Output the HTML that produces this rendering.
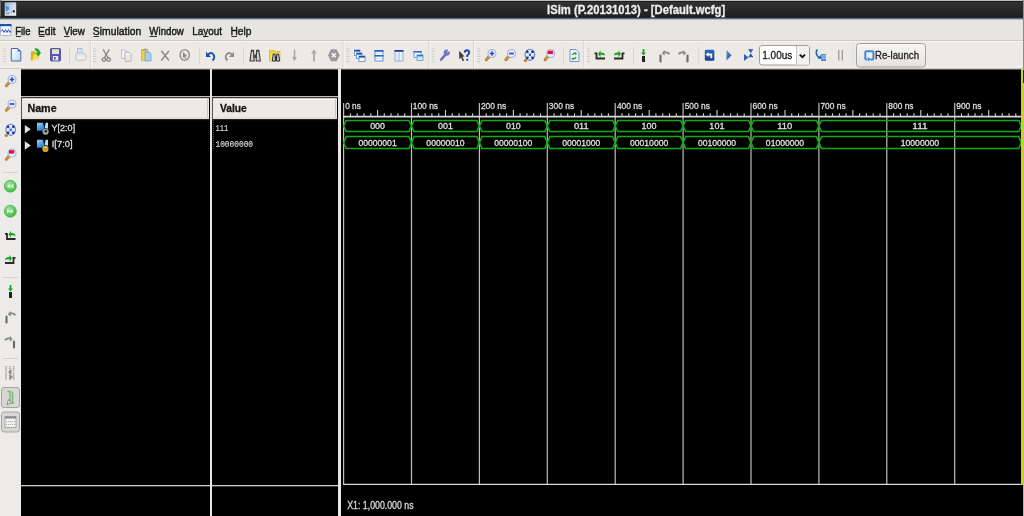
<!DOCTYPE html>
<html><head><meta charset="utf-8"><title>ISim</title>
<style>html,body{margin:0;padding:0;background:#edebe8;}body{width:1024px;height:516px;overflow:hidden;font-family:"Liberation Sans",sans-serif;}svg{display:block;will-change:transform;}</style>
</head><body>
<svg width="1024" height="516" viewBox="0 0 1024 516">
<defs>
<linearGradient id="gtitle" x1="0" y1="0" x2="0" y2="1"><stop offset="0" stop-color="#353535"/><stop offset="1" stop-color="#1c1c1c"/></linearGradient>
<linearGradient id="gbtn" x1="0" y1="0" x2="0" y2="1"><stop offset="0" stop-color="#f7f6f4"/><stop offset="1" stop-color="#e4e2de"/></linearGradient>
</defs>
<defs>
<linearGradient id="gpage" x1="0" y1="0" x2="1" y2="1"><stop offset="0" stop-color="#ffffff"/><stop offset="1" stop-color="#b8d8f6"/></linearGradient>
<radialGradient id="ggreen" cx="0.4" cy="0.35" r="0.7"><stop offset="0" stop-color="#9ee89a"/><stop offset="1" stop-color="#3cb83c"/></radialGradient>
</defs>
<defs>
<linearGradient id="gblue" x1="0" y1="0" x2="0" y2="1"><stop offset="0" stop-color="#2a66c4"/><stop offset="1" stop-color="#163e94"/></linearGradient>
<linearGradient id="gblue2" x1="0" y1="0" x2="1" y2="1"><stop offset="0" stop-color="#5a9ae0"/><stop offset="1" stop-color="#1a48a8"/></linearGradient>
<linearGradient id="gtic" x1="0" y1="0" x2="1" y2="1"><stop offset="0" stop-color="#8aaee0"/><stop offset="0.45" stop-color="#c8d6ea"/><stop offset="1" stop-color="#eef0f4"/></linearGradient>
<linearGradient id="gsig" x1="0" y1="0" x2="0.6" y2="1"><stop offset="0" stop-color="#a4d4f8"/><stop offset="0.6" stop-color="#4aa0e8"/><stop offset="1" stop-color="#2a78d0"/></linearGradient>
</defs>
<rect x="0" y="0" width="1024" height="516" fill="#edeae6"/>
<rect x="0" y="0" width="1024" height="19.5" fill="url(#gtitle)"/>
<rect x="0" y="0" width="1024" height="1" fill="#bcbcbc"/>
<rect x="0" y="1" width="1024" height="1" fill="#1c1c1c"/>
<rect x="0" y="0" width="1" height="19" fill="#6a6a6a"/>
<rect x="0" y="16.8" width="1024" height="1" fill="#141820"/>
<rect x="0" y="17.8" width="1024" height="1.6" fill="#5c6c84"/>
<rect x="4.7" y="2.3" width="11.5" height="13.5" fill="url(#gtic)"/><path d="M5.7,6.3 q3,-1 4,2 q-1,3 -4,3 z" fill="#4a7ed0" opacity="0.8"/><path d="M6.2,13.3 h3 M10.7,12.8 l2,-2" stroke="#5a6a88" stroke-width="1"/><rect x="13.0" y="10.1" width="1.8" height="2.4" fill="#2a2a2a"/>
<text x="547.07" y="13.70" font-family='"Liberation Sans",sans-serif' font-size="12.14" font-weight="bold" fill="#ececec" stroke="#ececec" stroke-width="0.3" textLength="178.16" lengthAdjust="spacingAndGlyphs" >ISim (P.20131013) - [Default.wcfg]</text>
<rect x="0" y="19.4" width="1024" height="20.8" fill="#e7e5e1"/>
<rect x="0.5" y="24.5" width="10.5" height="11" rx="1" fill="#f6f8fc" stroke="#98a8c8" stroke-width="0.8"/><rect x="0" y="24" width="11.5" height="2.2" fill="#2050a8"/><path d="M1,31.5 l1.5,-2 l1.5,3 l1.5,-3 l1.5,3 l1.5,-3 l1.5,3 l1,-1.5" fill="none" stroke="#2a5cc0" stroke-width="1"/>
<text x="15.14" y="34.90" font-family='"Liberation Sans",sans-serif' font-size="11.03" fill="#1a1a1a" stroke="#1a1a1a" stroke-width="0.45" textLength="15.30" lengthAdjust="spacingAndGlyphs" >File</text>
<text x="37.88" y="34.90" font-family='"Liberation Sans",sans-serif' font-size="11.03" fill="#1a1a1a" stroke="#1a1a1a" stroke-width="0.45" textLength="17.71" lengthAdjust="spacingAndGlyphs" >Edit</text>
<text x="63.85" y="34.90" font-family='"Liberation Sans",sans-serif' font-size="11.03" fill="#1a1a1a" stroke="#1a1a1a" stroke-width="0.45" textLength="20.94" lengthAdjust="spacingAndGlyphs" >View</text>
<text x="92.83" y="34.90" font-family='"Liberation Sans",sans-serif' font-size="11.03" fill="#1a1a1a" stroke="#1a1a1a" stroke-width="0.45" textLength="48.43" lengthAdjust="spacingAndGlyphs" >Simulation</text>
<text x="149.35" y="34.90" font-family='"Liberation Sans",sans-serif' font-size="11.03" fill="#1a1a1a" stroke="#1a1a1a" stroke-width="0.45" textLength="34.42" lengthAdjust="spacingAndGlyphs" >Window</text>
<text x="192.20" y="34.90" font-family='"Liberation Sans",sans-serif' font-size="11.59" fill="#1a1a1a" stroke="#1a1a1a" stroke-width="0.45" textLength="29.87" lengthAdjust="spacingAndGlyphs" >Layout</text>
<text x="230.38" y="34.90" font-family='"Liberation Sans",sans-serif' font-size="11.03" fill="#1a1a1a" stroke="#1a1a1a" stroke-width="0.45" textLength="21.05" lengthAdjust="spacingAndGlyphs" >Help</text>
<rect x="16" y="36" width="5" height="1" fill="#303030"/>
<rect x="39" y="36" width="5.5" height="1" fill="#303030"/>
<rect x="64" y="36" width="5.5" height="1" fill="#303030"/>
<rect x="93.5" y="36" width="5.5" height="1" fill="#303030"/>
<rect x="149.5" y="36" width="7.5" height="1" fill="#303030"/>
<rect x="203" y="36" width="5.5" height="1" fill="#303030"/>
<rect x="231.5" y="36" width="5.5" height="1" fill="#303030"/>
<rect x="0" y="40" width="1024" height="1" fill="#ceCAc5"/>
<rect x="0" y="41" width="1024" height="1" fill="#f6f4f1"/>
<rect x="0" y="66.3" width="1024" height="1" fill="#f3f1ee"/>
<rect x="0" y="68" width="1024" height="1" fill="#cdc9c4"/>
<rect x="89.8" y="41" width="1" height="27" fill="#d0cecA"/><rect x="90.8" y="41" width="1" height="27" fill="#faf9f8"/>
<rect x="342.6" y="41" width="1" height="27" fill="#d0cecA"/><rect x="343.6" y="41" width="1" height="27" fill="#faf9f8"/>
<rect x="428.5" y="41" width="1" height="27" fill="#d0cecA"/><rect x="429.5" y="41" width="1" height="27" fill="#faf9f8"/>
<rect x="473.2" y="41" width="1" height="27" fill="#d0cecA"/><rect x="474.2" y="41" width="1" height="27" fill="#faf9f8"/>
<rect x="583.4" y="41" width="1" height="27" fill="#d0cecA"/><rect x="584.4" y="41" width="1" height="27" fill="#faf9f8"/>
<rect x="69" y="47" width="1" height="17" fill="#d8d6d2"/>
<rect x="199" y="47" width="1" height="17" fill="#d8d6d2"/>
<rect x="243" y="47" width="1" height="17" fill="#d8d6d2"/>
<rect x="563" y="47" width="1" height="17" fill="#d8d6d2"/>
<rect x="633" y="47" width="1" height="17" fill="#d8d6d2"/>
<rect x="697.8" y="47" width="1" height="17" fill="#d8d6d2"/>
<rect x="3.2" y="48.5" width="3" height="1" fill="#cfcdc9"/><rect x="3.2" y="51.0" width="3" height="1" fill="#cfcdc9"/><rect x="3.2" y="53.5" width="3" height="1" fill="#cfcdc9"/><rect x="3.2" y="56.0" width="3" height="1" fill="#cfcdc9"/><rect x="3.2" y="58.5" width="3" height="1" fill="#cfcdc9"/><rect x="3.2" y="61.0" width="3" height="1" fill="#cfcdc9"/>
<rect x="93.0" y="48.5" width="3" height="1" fill="#cfcdc9"/><rect x="93.0" y="51.0" width="3" height="1" fill="#cfcdc9"/><rect x="93.0" y="53.5" width="3" height="1" fill="#cfcdc9"/><rect x="93.0" y="56.0" width="3" height="1" fill="#cfcdc9"/><rect x="93.0" y="58.5" width="3" height="1" fill="#cfcdc9"/><rect x="93.0" y="61.0" width="3" height="1" fill="#cfcdc9"/>
<rect x="346.5" y="48.5" width="3" height="1" fill="#cfcdc9"/><rect x="346.5" y="51.0" width="3" height="1" fill="#cfcdc9"/><rect x="346.5" y="53.5" width="3" height="1" fill="#cfcdc9"/><rect x="346.5" y="56.0" width="3" height="1" fill="#cfcdc9"/><rect x="346.5" y="58.5" width="3" height="1" fill="#cfcdc9"/><rect x="346.5" y="61.0" width="3" height="1" fill="#cfcdc9"/>
<rect x="431.5" y="48.5" width="3" height="1" fill="#cfcdc9"/><rect x="431.5" y="51.0" width="3" height="1" fill="#cfcdc9"/><rect x="431.5" y="53.5" width="3" height="1" fill="#cfcdc9"/><rect x="431.5" y="56.0" width="3" height="1" fill="#cfcdc9"/><rect x="431.5" y="58.5" width="3" height="1" fill="#cfcdc9"/><rect x="431.5" y="61.0" width="3" height="1" fill="#cfcdc9"/>
<rect x="477.0" y="48.5" width="3" height="1" fill="#cfcdc9"/><rect x="477.0" y="51.0" width="3" height="1" fill="#cfcdc9"/><rect x="477.0" y="53.5" width="3" height="1" fill="#cfcdc9"/><rect x="477.0" y="56.0" width="3" height="1" fill="#cfcdc9"/><rect x="477.0" y="58.5" width="3" height="1" fill="#cfcdc9"/><rect x="477.0" y="61.0" width="3" height="1" fill="#cfcdc9"/>
<rect x="587.0" y="48.5" width="3" height="1" fill="#cfcdc9"/><rect x="587.0" y="51.0" width="3" height="1" fill="#cfcdc9"/><rect x="587.0" y="53.5" width="3" height="1" fill="#cfcdc9"/><rect x="587.0" y="56.0" width="3" height="1" fill="#cfcdc9"/><rect x="587.0" y="58.5" width="3" height="1" fill="#cfcdc9"/><rect x="587.0" y="61.0" width="3" height="1" fill="#cfcdc9"/>
<path d="M11.3,48.5 h6.5 l3,3 v9.5 h-9.5 z" fill="url(#gpage)" stroke="#4a64a8" stroke-width="1"/><path d="M17.8,48.5 v3 h3 z" fill="#3b5ba8"/>
<path d="M31.0,51.5 L34.5,51.0 L35.5,52.3 L38.2,52.5 L38.2,58.0 L32.0,60.8 L30.8,60.3 Z" fill="#d4b428"/><path d="M32.0,60.8 L33.8,54.5 L40.2,53.6 L38.6,58.6 Z" fill="#f2de4c"/><path d="M34.8,48.3 Q39.8,48.2 40.1,52.6 L41.4,52.4 L38.3,56.5 L35.7,52.9 L37.4,52.7 Q37.1,50.6 34.8,50.3 Z" fill="#22a52e"/>
<rect x="50.5" y="48.5" width="10" height="12.5" rx="0.8" fill="#5656b4" stroke="#43439a" stroke-width="0.8"/><rect x="52" y="49.2" width="7" height="4.8" fill="#dfe3d0"/><rect x="52.8" y="56" width="5.5" height="4.5" fill="#e8e8f4"/><rect x="54" y="57" width="1.6" height="2.5" fill="#4c4ca8"/>
<rect x="77.5" y="48.5" width="4.5" height="5.5" fill="#cfe2f4" stroke="#b4b0cc" stroke-width="0.8"/><path d="M75.6,55 q0.4,-1.8 2,-2 h5.5 q2.6,0.3 3,2.6 v3.2 q-0.8,1.8 -3.6,1.9 h-4.8 q-1.8,-0.3 -2.1,-1.8 z" fill="#e6e6e6" stroke="#bdbdbd" stroke-width="0.8"/><path d="M77.5,57.5 h6" stroke="#f8f8f8" stroke-width="1"/>
<path d="M104.3,57.8 L109.3,49.3" stroke="#8a8a8a" stroke-width="1.4"/><path d="M108.10000000000001,57.8 L103.10000000000001,49.3" stroke="#8a8a8a" stroke-width="1.4"/><circle cx="103.9" cy="59.6" r="1.8" fill="none" stroke="#828282" stroke-width="1.3"/><circle cx="108.60000000000001" cy="59.6" r="1.8" fill="none" stroke="#828282" stroke-width="1.3"/>
<path d="M121.5,50.0 h4 l1.5,1.5 v7 h-5.5 z" fill="#f0f0f0" stroke="#b8b8b8" stroke-width="0.8"/><path d="M125,52.3 h4 l2,2 v7 h-6 z" fill="#f4f4f4" stroke="#aaaaaa" stroke-width="0.8"/><path d="M126,56.0 h3.5 M126,58.0 h3.5 M126,60.0 h3.5" stroke="#c8c8c8" stroke-width="0.6"/>
<rect x="141.5" y="49.5" width="6.5" height="11" rx="0.5" fill="#ecd24a" stroke="#c0a020" stroke-width="0.6"/><path d="M143,49.2 q2,-1.2 4,0 v1.2 h-4 z" fill="#9a9a9a"/><path d="M145,52 h4 l2,2 v7 h-6 z" fill="#a8cdf2" stroke="#6a92cc" stroke-width="0.7"/>
<path d="M161.3,50.8 L169.0,60.5 M169.0,50.8 L161.3,60.5" stroke="#8e8e8e" stroke-width="1.6"/>
<ellipse cx="184.7" cy="55" rx="4.6" ry="5.4" fill="none" stroke="#8e8e8e" stroke-width="1.4"/><path d="M182.89999999999998,51.8 L187.29999999999998,56.2 L185.29999999999998,56.2 L186.29999999999998,58.6 L185.1,59 L184.1,56.8 L182.89999999999998,58 Z" fill="#8a8a8a"/>
<path d="M208.0,54.5 q3,-3 5.5,0 q2,3 -1,6" fill="none" stroke="#1a4fb8" stroke-width="1.9"/><path d="M206.0,51.8 v5.2 h5 z" fill="#1a4fb8"/>
<path d="M232,54.5 q-3,-3 -5.5,0 q-2,3 1,6" fill="none" stroke="#8e8e8e" stroke-width="1.9"/><path d="M234,51.8 v5.2 h-5 z" fill="#8e8e8e"/>
<path d="M251.40,50.20 L253.60,50.20 L254.20,61.00 L250.00,61.00 Z" fill="#cfcfcf" stroke="#3c3c3c" stroke-width="1.1" stroke-linejoin="round"/><path d="M256.60,50.20 L258.80,50.20 L260.40,61.00 L256.20,61.00 Z" fill="#cfcfcf" stroke="#3c3c3c" stroke-width="1.1" stroke-linejoin="round"/><path d="M253.60,54.50 h3 v3.5 h-3 z" fill="#4a4a4a"/><path d="M251.30,50.00 h2.4 v1.6 h-2.4 z M256.50,50.00 h2.4 v1.6 h-2.4 z" fill="#3a3a3a"/>
<path d="M269.5,50.3 h4.5 l1,1.2 h5 v9.5 h-10.5 z" fill="#ecd838" stroke="#c4a41c" stroke-width="0.6"/><path d="M269.8,61.0 l2,-8 h8.2 l-1,8 z" fill="#f4e460"/><path d="M273.2,54.0 h1.8 l0.5,7 h-3.2 z M276.8,54.0 h1.8 l1,7 h-3.2 z" fill="#c8c8d8" stroke="#1e1e30" stroke-width="0.9" stroke-linejoin="round"/><rect x="275.2" y="56.5" width="1.6" height="2.5" fill="#1e1e30"/>
<path d="M294.5,49.5 v8.5" stroke="#a8a8a8" stroke-width="1.6"/><path d="M292,57 h5 l-2.5,4 z" fill="#a8a8a8"/>
<path d="M314,52.5 v9" stroke="#a8a8a8" stroke-width="1.8"/><path d="M311,53.5 h6 l-3,-4 z" fill="#a8a8a8"/>
<path d="M331.0,49.2 h5.6 l3,6 l-3,6 h-5.6 l-3,-6 z" fill="#9a9a9a"/><path d="M331.8,53.2 L335.8,57.2 M335.8,53.2 L331.8,57.2" stroke="#fafafa" stroke-width="1.5"/>
<rect x="354.5" y="50" width="5.5" height="5.5" fill="#f4f8fc" stroke="#5d8ad0" stroke-width="0.8"/><rect x="354.5" y="50" width="5.5" height="1.6" fill="#1f4fa6"/><rect x="356.5" y="53" width="5.5" height="5.5" fill="#f4f8fc" stroke="#5d8ad0" stroke-width="0.8"/><rect x="356.5" y="53" width="5.5" height="1.6" fill="#1f4fa6"/><rect x="359" y="56" width="6" height="5.5" fill="#f4f8fc" stroke="#5d8ad0" stroke-width="0.8"/><rect x="359" y="56" width="6" height="1.6" fill="#1f4fa6"/>
<rect x="375.0" y="50.5" width="8" height="10.5" fill="#f8fbff" stroke="#3f78cc" stroke-width="0.8"/><rect x="374.5" y="50" width="9" height="1.8" fill="#2a62c2"/><rect x="374.5" y="55" width="9" height="1.6" fill="#2a62c2"/><path d="M376.0,53.3 h6 M376.0,58.5 h6" stroke="#cfe4f8" stroke-width="1"/>
<rect x="395.0" y="50.5" width="8" height="10.5" fill="#f4faff" stroke="#7f9ccc" stroke-width="0.8"/><rect x="394.5" y="50" width="9" height="1.8" fill="#1f3f98"/><path d="M399.0,52 v9" stroke="#8aa4d0" stroke-width="0.9"/><path d="M396.8,53 v7 M401.2,53 v7" stroke="#d4ecfc" stroke-width="1.4"/>
<rect x="414.0" y="51.5" width="7" height="6" fill="#e8f2fc" stroke="#5d8ad0" stroke-width="0.8"/><rect x="413.5" y="51" width="8" height="1.5" fill="#2a62c2"/><rect x="417.0" y="55" width="6" height="5.5" fill="#cfe8fa" stroke="#5d9ad8" stroke-width="0.8"/><rect x="417.0" y="55" width="6" height="1.4" fill="#2a72c2"/>
<path d="M441.1,59.6 L445.7,54.4" stroke="#6e6ec4" stroke-width="2.5" stroke-linecap="round"/><circle cx="446.8" cy="52.6" r="3.1" fill="#7474cc"/><path d="M447.1,52.4 l1.2,-3.5 l2.5,1.8 z" fill="#edebe8"/>
<path d="M459.2,50.8 L464.6,56.4 L462.4,56.8 L464.2,60.6 L462.7,61.2 L461,57.4 L459.2,59.2 z" fill="#3e3e3e"/><path d="M464.6,52.6 q0.4,-2.4 2.3,-2.4 q2.3,0.1 2.3,2.3 q0,1.6 -1.9,2.7 v1.9" fill="none" stroke="#2244aa" stroke-width="1.9"/><rect x="466.3" y="58.8" width="1.9" height="2" fill="#2244aa"/>
<path d="M486.4,59.8 L489.2,56.5" stroke="#b8741e" stroke-width="2.9" stroke-linecap="round"/><path d="M486.4,59.8 L489.2,56.5" stroke="#dc9a40" stroke-width="1.3" stroke-linecap="round"/><circle cx="492" cy="53.5" r="4" fill="#e4ecfc" stroke="#a4b2e6" stroke-width="1.1"/><path d="M489.8,53.5 h4.4 M492,51.3 v4.4" stroke="#2e4ea8" stroke-width="1.5"/>
<path d="M505.9,59.8 L508.7,56.5" stroke="#b8741e" stroke-width="2.9" stroke-linecap="round"/><path d="M505.9,59.8 L508.7,56.5" stroke="#dc9a40" stroke-width="1.3" stroke-linecap="round"/><circle cx="511.5" cy="53.5" r="4" fill="#e4ecfc" stroke="#a4b2e6" stroke-width="1.1"/><path d="M509.2,53.5 h4.6" stroke="#2e4ea8" stroke-width="1.7"/>
<circle cx="525.5" cy="60.4" r="1.7" fill="#c4862a"/><ellipse cx="529.9000000000001" cy="54.8" rx="4.8" ry="5.6" fill="#d6eefc" stroke="#6a7ad0" stroke-width="1.1"/><circle cx="527.3000000000001" cy="51.809999999999995" r="1.3" fill="#1a2a84"/><circle cx="532.5000000000001" cy="51.809999999999995" r="1.3" fill="#1a2a84"/><circle cx="527.3000000000001" cy="57.79" r="1.3" fill="#1a2a84"/><circle cx="532.5000000000001" cy="57.79" r="1.3" fill="#1a2a84"/><path d="M527.3000000000001,51.809999999999995 L532.5000000000001,57.79 M532.5000000000001,51.809999999999995 L527.3000000000001,57.79" stroke="#3a4a9a" stroke-width="0.6" opacity="0.6"/><rect x="529.0000000000001" y="53.9" width="1.8" height="1.8" fill="#2a3a8a"/>
<path d="M545.1,59.8 L547.9000000000001,56.5" stroke="#b8741e" stroke-width="2.9" stroke-linecap="round"/><path d="M545.1,59.8 L547.9000000000001,56.5" stroke="#dc9a40" stroke-width="1.3" stroke-linecap="round"/><circle cx="550.7" cy="53.5" r="4" fill="#e4ecfc" stroke="#a4b2e6" stroke-width="1.1"/><rect x="547.7" y="50.7" width="5.2" height="3.4" fill="#e8102a"/>
<path d="M570.0,49.5 h6 l3,3 v9 h-9 z" fill="#eef4fc" stroke="#6c88c8" stroke-width="0.9"/><path d="M572.5,55 q1,-2.5 3.5,-1.5" fill="none" stroke="#22a02a" stroke-width="1.5"/><path d="M576.0,57 q-1,2.5 -3.5,1.5" fill="none" stroke="#22a02a" stroke-width="1.5"/><path d="M575.0,52.3 l2.2,1.5 l-2,1.5 z M573.5,60.2 l-2.2,-1.5 l2,-1.5 z" fill="#22a02a"/>
<path d="M594.5,53.4 h2 v5.1 h8.5" fill="none" stroke="#2a2a2a" stroke-width="1.8"/><path d="M598.0,54 L600.5,50.3 L600.5,52.6 Q605.0,52.3 605.0,55.6 Q603.5,54.6 600.5,54.8 L600.5,57.2 z" fill="#1ea424"/>
<path d="M624.5,53.4 h-2 v5.1 h-8.5" fill="none" stroke="#2a2a2a" stroke-width="1.8"/><path d="M621.0,54 L618.5,50.3 L618.5,52.6 Q614.0,52.3 614.0,55.6 Q615.5,54.6 618.5,54.8 L618.5,57.2 z" fill="#1ea424"/>
<path d="M643.5,49 v4" stroke="#22a02a" stroke-width="1.8"/><path d="M641,52.5 h5 l-2.5,3 z" fill="#22a02a"/><rect x="642" y="56" width="3" height="6" fill="#222"/>
<path d="M660.5,55.5 v6" stroke="#6a6a6a" stroke-width="2.1" stroke-linecap="round"/><path d="M664.0,52.3 Q668.0,51.7 669.5,54.3" fill="none" stroke="#8c8c8c" stroke-width="2"/><path d="M661.7,53.5 L664.5,49.7 L664.8,55.5 z" fill="#8c8c8c"/>
<path d="M687.5,55.5 v6" stroke="#6a6a6a" stroke-width="2.1" stroke-linecap="round"/><path d="M684.0,52.3 Q680.0,51.7 678.5,54.3" fill="none" stroke="#8c8c8c" stroke-width="2"/><path d="M686.3,53.5 L683.5,49.7 L683.2,55.5 z" fill="#8c8c8c"/>
<rect x="704.8" y="49.8" width="9.5" height="11" rx="1.3" fill="url(#gblue)"/><path d="M707.7,54.5 h3.6 v3.8" fill="none" stroke="#f4f4f4" stroke-width="1.8"/><path d="M705.7,54.5 l2.8,-2.6 v5.2 z" fill="#f4f4f4"/>
<path d="M726.5,50 L731.5,55.3 L726.5,60.5 z" fill="url(#gblue2)"/>
<path d="M744,54.0 L748.5,57.5 L744,61.0 z" fill="#2d62c0"/><path d="M748.5,49.8 h4.5 M748.5,56.7 h4.5" stroke="#1f3f98" stroke-width="1"/><path d="M749,50.3 h3.5 l-1.75,3 z M749,56.3 h3.5 l-1.75,-3 z" fill="#2648a8"/>
<rect x="821.0" y="54" width="5" height="7" fill="#5a88d0"/><path d="M821.0,56 h5 M821.0,58.3 h5" stroke="#d8e4f4" stroke-width="0.8"/><path d="M817.5,49.5 q-2.5,3 0,6.5 l2,1.8" fill="none" stroke="#1f6ab8" stroke-width="1.6"/><path d="M817.3,58.5 l4.2,0.5 l-0.5,-4.2 z" fill="#1f6ab8"/>
<path d="M838.8,50 v10.5 M842.3,50 v10.5" stroke="#8e8e8e" stroke-width="1.1"/>
<rect x="759.5" y="45.5" width="50" height="19.5" rx="2.5" fill="#ffffff" stroke="#a09e9a" stroke-width="1"/>
<rect x="796.5" y="46" width="12.5" height="18.5" fill="#f2f1ef"/>
<rect x="796" y="46" width="1" height="18.5" fill="#c4c2be"/>
<path d="M799.8,54.6 l2.6,2.6 l2.6,-2.6" fill="none" stroke="#111" stroke-width="1.9"/>
<text x="762.25" y="59.00" font-family='"Liberation Sans",sans-serif' font-size="11.43" fill="#1a1a1a" stroke="#1a1a1a" stroke-width="0.3" textLength="30.08" lengthAdjust="spacingAndGlyphs" >1.00us</text>
<rect x="856.5" y="43.5" width="69" height="23.5" rx="3" fill="url(#gbtn)" stroke="#a4a29e" stroke-width="1"/>
<path d="M867.4000000000001,59.6 h-1 q-1.1,0 -1.1,-1.1 v-6.1 q0,-1.1 1.1,-1.1 h5.9 q1.1,0 1.1,1.1 v6.1 q0,1.1 -1.1,1.1 h-1.8" fill="#f2ecea" stroke="#3d8ad6" stroke-width="2"/><path d="M867.8000000000001,56.800000000000004 l3.2,2.8 l-3.2,1.6 z" fill="#3d8ad6"/>
<text x="875.03" y="58.75" font-family='"Liberation Sans",sans-serif' font-size="10.83" fill="#1e1e1e" stroke="#1e1e1e" stroke-width="0.3" textLength="44.03" lengthAdjust="spacingAndGlyphs" >Re-launch</text>
<rect x="0" y="69" width="21" height="447" fill="#edebe8"/>
<path d="M6.4,85.8 L9.2,82.5" stroke="#b8741e" stroke-width="2.9" stroke-linecap="round"/><path d="M6.4,85.8 L9.2,82.5" stroke="#dc9a40" stroke-width="1.3" stroke-linecap="round"/><circle cx="12" cy="79.5" r="4" fill="#e4ecfc" stroke="#a4b2e6" stroke-width="1.1"/><path d="M9.8,79.5 h4.4 M12,77.3 v4.4" stroke="#2e4ea8" stroke-width="1.5"/>
<path d="M6.4,110.3 L9.2,107" stroke="#b8741e" stroke-width="2.9" stroke-linecap="round"/><path d="M6.4,110.3 L9.2,107" stroke="#dc9a40" stroke-width="1.3" stroke-linecap="round"/><circle cx="12" cy="104" r="4" fill="#e4ecfc" stroke="#a4b2e6" stroke-width="1.1"/><path d="M9.7,104 h4.6" stroke="#2e4ea8" stroke-width="1.7"/>
<circle cx="6.3" cy="135.4" r="1.7" fill="#c4862a"/><ellipse cx="10.7" cy="129.8" rx="4.8" ry="5.6" fill="#d6eefc" stroke="#6a7ad0" stroke-width="1.1"/><circle cx="8.1" cy="126.81000000000002" r="1.3" fill="#1a2a84"/><circle cx="13.299999999999999" cy="126.81000000000002" r="1.3" fill="#1a2a84"/><circle cx="8.1" cy="132.79000000000002" r="1.3" fill="#1a2a84"/><circle cx="13.299999999999999" cy="132.79000000000002" r="1.3" fill="#1a2a84"/><path d="M8.1,126.81000000000002 L13.299999999999999,132.79000000000002 M13.299999999999999,126.81000000000002 L8.1,132.79000000000002" stroke="#3a4a9a" stroke-width="0.6" opacity="0.6"/><rect x="9.799999999999999" y="128.9" width="1.8" height="1.8" fill="#2a3a8a"/>
<path d="M6.4,159.3 L9.2,156" stroke="#b8741e" stroke-width="2.9" stroke-linecap="round"/><path d="M6.4,159.3 L9.2,156" stroke="#dc9a40" stroke-width="1.3" stroke-linecap="round"/><circle cx="12" cy="153" r="4" fill="#e4ecfc" stroke="#a4b2e6" stroke-width="1.1"/><rect x="9" y="150.2" width="5.2" height="3.4" fill="#e8102a"/>
<rect x="3" y="172" width="15" height="1" fill="#d4d2ce"/>
<circle cx="10.3" cy="186.2" r="6" fill="url(#ggreen)" stroke="#3aa83a" stroke-width="0.6"/><path d="M7.800000000000001,186.2 h5 M7.800000000000001,186.2 l2,-1.8 M7.800000000000001,186.2 l2,1.8 M12.8,184.2 v4" stroke="#fff" stroke-width="1"/>
<circle cx="10.3" cy="211.2" r="6" fill="url(#ggreen)" stroke="#3aa83a" stroke-width="0.6"/><path d="M12.8,211.2 h-5 M12.8,211.2 l-2,-1.8 M12.8,211.2 l-2,1.8 M7.800000000000001,209.2 v4" stroke="#fff" stroke-width="1"/>
<path d="M5,233.9 h2 v5.1 h8.5" fill="none" stroke="#2a2a2a" stroke-width="1.8"/><path d="M8.5,234.5 L11,230.8 L11,233.1 Q15.5,232.8 15.5,236.1 Q14,235.1 11,235.3 L11,237.7 z" fill="#1ea424"/>
<path d="M15.5,257.9 h-2 v5.1 h-8.5" fill="none" stroke="#2a2a2a" stroke-width="1.8"/><path d="M12.0,258.5 L9.5,254.8 L9.5,257.1 Q5.0,256.8 5.0,260.1 Q6.5,259.1 9.5,259.3 L9.5,261.7 z" fill="#1ea424"/>
<rect x="3" y="277" width="15" height="1" fill="#d4d2ce"/>
<path d="M10.5,285 v4" stroke="#22a02a" stroke-width="1.8"/><path d="M8,288.5 h5 l-2.5,3 z" fill="#22a02a"/><rect x="9" y="292" width="3" height="6" fill="#222"/>
<path d="M6.5,316.5 v6" stroke="#6a6a6a" stroke-width="2.1" stroke-linecap="round"/><path d="M10.0,313.3 Q14.0,312.7 15.5,315.3" fill="none" stroke="#8c8c8c" stroke-width="2"/><path d="M7.7,314.5 L10.5,310.7 L10.8,316.5 z" fill="#8c8c8c"/>
<path d="M14.0,341.5 v6" stroke="#6a6a6a" stroke-width="2.1" stroke-linecap="round"/><path d="M10.5,338.3 Q6.5,337.7 5.0,340.3" fill="none" stroke="#8c8c8c" stroke-width="2"/><path d="M12.8,339.5 L10.0,335.7 L9.7,341.5 z" fill="#8c8c8c"/>
<rect x="3" y="358" width="15" height="1" fill="#d4d2ce"/>
<path d="M6,366 v14 M9.8,366 v14 M13.6,366 v14" stroke="#a4a4a4" stroke-width="1.6" stroke-dasharray="1.2 0.6"/>
<path d="M8,372 l3.5,-3 v6 z M13,377 l-3.5,-3 v6 z" fill="#8a8a8a"/>
<rect x="1.5" y="387.5" width="18" height="20" rx="2.5" fill="#d9d7d3" stroke="#a6a4a0" stroke-width="1"/>
<path d="M7.5,391.5 h2.5 v10 M12.5,391.5 v11.5 h1.5" fill="none" stroke="#74b874" stroke-width="1.4"/>
<path d="M7,404.5 l1.5,-5 l3,3.5 l-2,0.3 z" fill="#f4f4f4" stroke="#505050" stroke-width="0.6"/>
<rect x="1.5" y="412" width="18" height="20" rx="2.5" fill="#d9d7d3" stroke="#a6a4a0" stroke-width="1"/>
<rect x="5" y="416.5" width="11" height="11" fill="#f2f2f2" stroke="#9a9a9a" stroke-width="0.8"/>
<rect x="5" y="416.5" width="11" height="2" fill="#8a8a8a"/>
<path d="M6,421.5 h9 M6,424.5 h9" stroke="#a8a8a8" stroke-width="0.9" stroke-dasharray="1.2 0.8"/>
<rect x="21" y="69.4" width="1003" height="447" fill="#000"/>
<rect x="210" y="69" width="2" height="447" fill="#e9e7e4"/>
<rect x="338" y="69" width="3" height="447" fill="#e9e7e4"/>
<rect x="21" y="96" width="189" height="1" fill="#c4c2be"/>
<rect x="21" y="97" width="189" height="1.2" fill="#3a3a3a"/>
<rect x="21" y="98.2" width="188" height="21" fill="#edeae6"/>
<rect x="21" y="98" width="1" height="21" fill="#555"/>
<rect x="22" y="98.8" width="186" height="1.2" fill="#fbfaf9"/>
<rect x="22" y="117" width="187" height="2" fill="#e4e1dd"/>
<rect x="207" y="99" width="1" height="19" fill="#c8c6c2"/>
<rect x="21" y="119.2" width="189" height="1" fill="#202020"/>
<rect x="212" y="96" width="126" height="1" fill="#c4c2be"/>
<rect x="212" y="97" width="126" height="1.2" fill="#3a3a3a"/>
<rect x="212" y="98.2" width="125" height="21" fill="#edeae6"/>
<rect x="212" y="98" width="1" height="21" fill="#555"/>
<rect x="213" y="98.8" width="123" height="1.2" fill="#fbfaf9"/>
<rect x="213" y="117" width="124" height="2" fill="#e4e1dd"/>
<rect x="335" y="99" width="1" height="19" fill="#c8c6c2"/>
<rect x="212" y="119.2" width="126" height="1" fill="#202020"/>
<text x="27.40" y="112.00" font-family='"Liberation Sans",sans-serif' font-size="11.01" font-weight="bold" fill="#141414" stroke="#141414" stroke-width="0.3" textLength="29.26" lengthAdjust="spacingAndGlyphs" >Name</text>
<text x="219.95" y="112.00" font-family='"Liberation Sans",sans-serif' font-size="10.48" font-weight="bold" fill="#141414" stroke="#141414" stroke-width="0.3" textLength="26.84" lengthAdjust="spacingAndGlyphs" >Value</text>
<rect x="21" y="485" width="189" height="1.3" fill="#cfcdca"/>
<rect x="212" y="485" width="126" height="1.3" fill="#cfcdca"/>
<path d="M24.8,124.9 L30.8,129.20000000000002 L24.8,133.5 z" fill="#e0e0e0"/>
<path d="M24.8,141.2 L30.8,145.5 L24.8,149.79999999999998 z" fill="#e0e0e0"/>
<path d="M37,122.8 H43 L44.8,130.8 H37 Z" fill="url(#gsig)"/><path d="M45.6,122.8 H48 V128.7 L44.6,128.1 Z" fill="#a6e4fc"/><circle cx="45.6" cy="131.7" r="3" fill="#a8a8a8"/><circle cx="45.6" cy="131.7" r="3" fill="none" stroke="#707070" stroke-width="0.8" stroke-dasharray="1.2 0.9"/><circle cx="45.8" cy="131.3" r="1.2" fill="#111"/>
<path d="M37,139.8 H43 L44.8,147.8 H37 Z" fill="url(#gsig)"/><path d="M45.6,139.8 H48 V145.7 L44.6,145.1 Z" fill="#a6e4fc"/><circle cx="45.4" cy="148.9" r="3.1" fill="#d4a41c"/><circle cx="45.4" cy="148.5" r="1.8" fill="#f0d060"/><path d="M44.2,148.1 l1.2,1.8 l1.2,-1.8" fill="none" stroke="#7a5a00" stroke-width="0.8"/>
<text x="51.57" y="131.40" font-family='"Liberation Sans",sans-serif' font-size="9.38" fill="#dcdcdc" stroke="#dcdcdc" stroke-width="0.3" textLength="23.58" lengthAdjust="spacingAndGlyphs" >Y[2:0]</text>
<text x="51.65" y="147.40" font-family='"Liberation Sans",sans-serif' font-size="9.24" fill="#dcdcdc" stroke="#dcdcdc" stroke-width="0.3" textLength="21.05" lengthAdjust="spacingAndGlyphs" >I[7:0]</text>
<text x="215.51" y="130.60" font-family='"Liberation Mono",monospace' font-size="8.48" fill="#d4d4d4" stroke="#d4d4d4" stroke-width="0.2" textLength="12.64" lengthAdjust="spacingAndGlyphs" >111</text>
<text x="215.45" y="147.00" font-family='"Liberation Mono",monospace' font-size="8.81" fill="#d4d4d4" stroke="#d4d4d4" stroke-width="0.2" textLength="37.62" lengthAdjust="spacingAndGlyphs" >10000000</text>
<path d="M213.3,120 v30" stroke="#7a7a7a" stroke-width="0.8" stroke-dasharray="1 1"/>
<line x1="343.6" y1="103" x2="343.6" y2="484.5" stroke="#bdbdbd" stroke-width="1.2"/>
<line x1="411.5" y1="103" x2="411.5" y2="484.5" stroke="#bdbdbd" stroke-width="1.2"/>
<line x1="479.4" y1="103" x2="479.4" y2="484.5" stroke="#bdbdbd" stroke-width="1.2"/>
<line x1="547.3" y1="103" x2="547.3" y2="484.5" stroke="#bdbdbd" stroke-width="1.2"/>
<line x1="615.2" y1="103" x2="615.2" y2="484.5" stroke="#bdbdbd" stroke-width="1.2"/>
<line x1="683.1" y1="103" x2="683.1" y2="484.5" stroke="#bdbdbd" stroke-width="1.2"/>
<line x1="751.0" y1="103" x2="751.0" y2="484.5" stroke="#bdbdbd" stroke-width="1.2"/>
<line x1="818.9" y1="103" x2="818.9" y2="484.5" stroke="#bdbdbd" stroke-width="1.2"/>
<line x1="886.8" y1="103" x2="886.8" y2="484.5" stroke="#bdbdbd" stroke-width="1.2"/>
<line x1="954.7" y1="103" x2="954.7" y2="484.5" stroke="#bdbdbd" stroke-width="1.2"/>
<line x1="343.1" y1="116.6" x2="1022" y2="116.6" stroke="#d8d8d8" stroke-width="1.6"/>
<line x1="350.4" y1="113.3" x2="350.4" y2="117" stroke="#d0d0d0" stroke-width="1.1"/>
<line x1="357.2" y1="113.3" x2="357.2" y2="117" stroke="#d0d0d0" stroke-width="1.1"/>
<line x1="364.0" y1="113.3" x2="364.0" y2="117" stroke="#d0d0d0" stroke-width="1.1"/>
<line x1="370.8" y1="113.3" x2="370.8" y2="117" stroke="#d0d0d0" stroke-width="1.1"/>
<line x1="377.6" y1="110" x2="377.6" y2="117" stroke="#d0d0d0" stroke-width="1.1"/>
<line x1="384.3" y1="113.3" x2="384.3" y2="117" stroke="#d0d0d0" stroke-width="1.1"/>
<line x1="391.1" y1="113.3" x2="391.1" y2="117" stroke="#d0d0d0" stroke-width="1.1"/>
<line x1="397.9" y1="113.3" x2="397.9" y2="117" stroke="#d0d0d0" stroke-width="1.1"/>
<line x1="404.7" y1="113.3" x2="404.7" y2="117" stroke="#d0d0d0" stroke-width="1.1"/>
<line x1="418.3" y1="113.3" x2="418.3" y2="117" stroke="#d0d0d0" stroke-width="1.1"/>
<line x1="425.1" y1="113.3" x2="425.1" y2="117" stroke="#d0d0d0" stroke-width="1.1"/>
<line x1="431.9" y1="113.3" x2="431.9" y2="117" stroke="#d0d0d0" stroke-width="1.1"/>
<line x1="438.7" y1="113.3" x2="438.7" y2="117" stroke="#d0d0d0" stroke-width="1.1"/>
<line x1="445.5" y1="110" x2="445.5" y2="117" stroke="#d0d0d0" stroke-width="1.1"/>
<line x1="452.2" y1="113.3" x2="452.2" y2="117" stroke="#d0d0d0" stroke-width="1.1"/>
<line x1="459.0" y1="113.3" x2="459.0" y2="117" stroke="#d0d0d0" stroke-width="1.1"/>
<line x1="465.8" y1="113.3" x2="465.8" y2="117" stroke="#d0d0d0" stroke-width="1.1"/>
<line x1="472.6" y1="113.3" x2="472.6" y2="117" stroke="#d0d0d0" stroke-width="1.1"/>
<line x1="486.2" y1="113.3" x2="486.2" y2="117" stroke="#d0d0d0" stroke-width="1.1"/>
<line x1="493.0" y1="113.3" x2="493.0" y2="117" stroke="#d0d0d0" stroke-width="1.1"/>
<line x1="499.8" y1="113.3" x2="499.8" y2="117" stroke="#d0d0d0" stroke-width="1.1"/>
<line x1="506.6" y1="113.3" x2="506.6" y2="117" stroke="#d0d0d0" stroke-width="1.1"/>
<line x1="513.4" y1="110" x2="513.4" y2="117" stroke="#d0d0d0" stroke-width="1.1"/>
<line x1="520.1" y1="113.3" x2="520.1" y2="117" stroke="#d0d0d0" stroke-width="1.1"/>
<line x1="526.9" y1="113.3" x2="526.9" y2="117" stroke="#d0d0d0" stroke-width="1.1"/>
<line x1="533.7" y1="113.3" x2="533.7" y2="117" stroke="#d0d0d0" stroke-width="1.1"/>
<line x1="540.5" y1="113.3" x2="540.5" y2="117" stroke="#d0d0d0" stroke-width="1.1"/>
<line x1="554.1" y1="113.3" x2="554.1" y2="117" stroke="#d0d0d0" stroke-width="1.1"/>
<line x1="560.9" y1="113.3" x2="560.9" y2="117" stroke="#d0d0d0" stroke-width="1.1"/>
<line x1="567.7" y1="113.3" x2="567.7" y2="117" stroke="#d0d0d0" stroke-width="1.1"/>
<line x1="574.5" y1="113.3" x2="574.5" y2="117" stroke="#d0d0d0" stroke-width="1.1"/>
<line x1="581.2" y1="110" x2="581.2" y2="117" stroke="#d0d0d0" stroke-width="1.1"/>
<line x1="588.0" y1="113.3" x2="588.0" y2="117" stroke="#d0d0d0" stroke-width="1.1"/>
<line x1="594.8" y1="113.3" x2="594.8" y2="117" stroke="#d0d0d0" stroke-width="1.1"/>
<line x1="601.6" y1="113.3" x2="601.6" y2="117" stroke="#d0d0d0" stroke-width="1.1"/>
<line x1="608.4" y1="113.3" x2="608.4" y2="117" stroke="#d0d0d0" stroke-width="1.1"/>
<line x1="622.0" y1="113.3" x2="622.0" y2="117" stroke="#d0d0d0" stroke-width="1.1"/>
<line x1="628.8" y1="113.3" x2="628.8" y2="117" stroke="#d0d0d0" stroke-width="1.1"/>
<line x1="635.6" y1="113.3" x2="635.6" y2="117" stroke="#d0d0d0" stroke-width="1.1"/>
<line x1="642.4" y1="113.3" x2="642.4" y2="117" stroke="#d0d0d0" stroke-width="1.1"/>
<line x1="649.2" y1="110" x2="649.2" y2="117" stroke="#d0d0d0" stroke-width="1.1"/>
<line x1="655.9" y1="113.3" x2="655.9" y2="117" stroke="#d0d0d0" stroke-width="1.1"/>
<line x1="662.7" y1="113.3" x2="662.7" y2="117" stroke="#d0d0d0" stroke-width="1.1"/>
<line x1="669.5" y1="113.3" x2="669.5" y2="117" stroke="#d0d0d0" stroke-width="1.1"/>
<line x1="676.3" y1="113.3" x2="676.3" y2="117" stroke="#d0d0d0" stroke-width="1.1"/>
<line x1="689.9" y1="113.3" x2="689.9" y2="117" stroke="#d0d0d0" stroke-width="1.1"/>
<line x1="696.7" y1="113.3" x2="696.7" y2="117" stroke="#d0d0d0" stroke-width="1.1"/>
<line x1="703.5" y1="113.3" x2="703.5" y2="117" stroke="#d0d0d0" stroke-width="1.1"/>
<line x1="710.3" y1="113.3" x2="710.3" y2="117" stroke="#d0d0d0" stroke-width="1.1"/>
<line x1="717.0" y1="110" x2="717.0" y2="117" stroke="#d0d0d0" stroke-width="1.1"/>
<line x1="723.8" y1="113.3" x2="723.8" y2="117" stroke="#d0d0d0" stroke-width="1.1"/>
<line x1="730.6" y1="113.3" x2="730.6" y2="117" stroke="#d0d0d0" stroke-width="1.1"/>
<line x1="737.4" y1="113.3" x2="737.4" y2="117" stroke="#d0d0d0" stroke-width="1.1"/>
<line x1="744.2" y1="113.3" x2="744.2" y2="117" stroke="#d0d0d0" stroke-width="1.1"/>
<line x1="757.8" y1="113.3" x2="757.8" y2="117" stroke="#d0d0d0" stroke-width="1.1"/>
<line x1="764.6" y1="113.3" x2="764.6" y2="117" stroke="#d0d0d0" stroke-width="1.1"/>
<line x1="771.4" y1="113.3" x2="771.4" y2="117" stroke="#d0d0d0" stroke-width="1.1"/>
<line x1="778.2" y1="113.3" x2="778.2" y2="117" stroke="#d0d0d0" stroke-width="1.1"/>
<line x1="785.0" y1="110" x2="785.0" y2="117" stroke="#d0d0d0" stroke-width="1.1"/>
<line x1="791.7" y1="113.3" x2="791.7" y2="117" stroke="#d0d0d0" stroke-width="1.1"/>
<line x1="798.5" y1="113.3" x2="798.5" y2="117" stroke="#d0d0d0" stroke-width="1.1"/>
<line x1="805.3" y1="113.3" x2="805.3" y2="117" stroke="#d0d0d0" stroke-width="1.1"/>
<line x1="812.1" y1="113.3" x2="812.1" y2="117" stroke="#d0d0d0" stroke-width="1.1"/>
<line x1="825.7" y1="113.3" x2="825.7" y2="117" stroke="#d0d0d0" stroke-width="1.1"/>
<line x1="832.5" y1="113.3" x2="832.5" y2="117" stroke="#d0d0d0" stroke-width="1.1"/>
<line x1="839.3" y1="113.3" x2="839.3" y2="117" stroke="#d0d0d0" stroke-width="1.1"/>
<line x1="846.1" y1="113.3" x2="846.1" y2="117" stroke="#d0d0d0" stroke-width="1.1"/>
<line x1="852.9" y1="110" x2="852.9" y2="117" stroke="#d0d0d0" stroke-width="1.1"/>
<line x1="859.6" y1="113.3" x2="859.6" y2="117" stroke="#d0d0d0" stroke-width="1.1"/>
<line x1="866.4" y1="113.3" x2="866.4" y2="117" stroke="#d0d0d0" stroke-width="1.1"/>
<line x1="873.2" y1="113.3" x2="873.2" y2="117" stroke="#d0d0d0" stroke-width="1.1"/>
<line x1="880.0" y1="113.3" x2="880.0" y2="117" stroke="#d0d0d0" stroke-width="1.1"/>
<line x1="893.6" y1="113.3" x2="893.6" y2="117" stroke="#d0d0d0" stroke-width="1.1"/>
<line x1="900.4" y1="113.3" x2="900.4" y2="117" stroke="#d0d0d0" stroke-width="1.1"/>
<line x1="907.2" y1="113.3" x2="907.2" y2="117" stroke="#d0d0d0" stroke-width="1.1"/>
<line x1="914.0" y1="113.3" x2="914.0" y2="117" stroke="#d0d0d0" stroke-width="1.1"/>
<line x1="920.8" y1="110" x2="920.8" y2="117" stroke="#d0d0d0" stroke-width="1.1"/>
<line x1="927.5" y1="113.3" x2="927.5" y2="117" stroke="#d0d0d0" stroke-width="1.1"/>
<line x1="934.3" y1="113.3" x2="934.3" y2="117" stroke="#d0d0d0" stroke-width="1.1"/>
<line x1="941.1" y1="113.3" x2="941.1" y2="117" stroke="#d0d0d0" stroke-width="1.1"/>
<line x1="947.9" y1="113.3" x2="947.9" y2="117" stroke="#d0d0d0" stroke-width="1.1"/>
<line x1="961.5" y1="113.3" x2="961.5" y2="117" stroke="#d0d0d0" stroke-width="1.1"/>
<line x1="968.3" y1="113.3" x2="968.3" y2="117" stroke="#d0d0d0" stroke-width="1.1"/>
<line x1="975.1" y1="113.3" x2="975.1" y2="117" stroke="#d0d0d0" stroke-width="1.1"/>
<line x1="981.9" y1="113.3" x2="981.9" y2="117" stroke="#d0d0d0" stroke-width="1.1"/>
<line x1="988.7" y1="110" x2="988.7" y2="117" stroke="#d0d0d0" stroke-width="1.1"/>
<line x1="995.4" y1="113.3" x2="995.4" y2="117" stroke="#d0d0d0" stroke-width="1.1"/>
<line x1="1002.2" y1="113.3" x2="1002.2" y2="117" stroke="#d0d0d0" stroke-width="1.1"/>
<line x1="1009.0" y1="113.3" x2="1009.0" y2="117" stroke="#d0d0d0" stroke-width="1.1"/>
<line x1="1015.8" y1="113.3" x2="1015.8" y2="117" stroke="#d0d0d0" stroke-width="1.1"/>
<line x1="343.1" y1="484.4" x2="1024" y2="484.4" stroke="#d8d8d8" stroke-width="1.4"/>
<text x="345.17" y="109.10" font-family='"Liberation Sans",sans-serif' font-size="9.29" fill="#dddddd" stroke="#dddddd" stroke-width="0.3" textLength="15.62" lengthAdjust="spacingAndGlyphs" >0 ns</text>
<text x="412.77" y="109.10" font-family='"Liberation Sans",sans-serif' font-size="9.29" fill="#dddddd" stroke="#dddddd" stroke-width="0.3" textLength="25.27" lengthAdjust="spacingAndGlyphs" >100 ns</text>
<text x="480.88" y="109.10" font-family='"Liberation Sans",sans-serif' font-size="9.29" fill="#dddddd" stroke="#dddddd" stroke-width="0.3" textLength="25.27" lengthAdjust="spacingAndGlyphs" >200 ns</text>
<text x="548.86" y="109.10" font-family='"Liberation Sans",sans-serif' font-size="9.29" fill="#dddddd" stroke="#dddddd" stroke-width="0.3" textLength="25.27" lengthAdjust="spacingAndGlyphs" >300 ns</text>
<text x="616.93" y="109.10" font-family='"Liberation Sans",sans-serif' font-size="9.29" fill="#dddddd" stroke="#dddddd" stroke-width="0.3" textLength="25.27" lengthAdjust="spacingAndGlyphs" >400 ns</text>
<text x="684.66" y="109.10" font-family='"Liberation Sans",sans-serif' font-size="9.29" fill="#dddddd" stroke="#dddddd" stroke-width="0.3" textLength="25.27" lengthAdjust="spacingAndGlyphs" >500 ns</text>
<text x="752.48" y="109.10" font-family='"Liberation Sans",sans-serif' font-size="9.29" fill="#dddddd" stroke="#dddddd" stroke-width="0.3" textLength="25.27" lengthAdjust="spacingAndGlyphs" >600 ns</text>
<text x="820.38" y="109.10" font-family='"Liberation Sans",sans-serif' font-size="9.29" fill="#dddddd" stroke="#dddddd" stroke-width="0.3" textLength="25.27" lengthAdjust="spacingAndGlyphs" >700 ns</text>
<text x="888.32" y="109.10" font-family='"Liberation Sans",sans-serif' font-size="9.29" fill="#dddddd" stroke="#dddddd" stroke-width="0.3" textLength="25.27" lengthAdjust="spacingAndGlyphs" >800 ns</text>
<text x="956.22" y="109.10" font-family='"Liberation Sans",sans-serif' font-size="9.29" fill="#dddddd" stroke="#dddddd" stroke-width="0.3" textLength="25.27" lengthAdjust="spacingAndGlyphs" >900 ns</text>
<path d="M343.6,126.0 L346.2,120.4 L408.9,120.4 L411.5,126.0 L408.9,131.6 L346.2,131.6 Z" fill="none" stroke="#12ac12" stroke-width="1.5" stroke-linejoin="round"/>
<text x="370.20" y="129.00" font-family='"Liberation Sans",sans-serif' font-size="9.71" fill="#e0e0e0" stroke="#e0e0e0" stroke-width="0.3" textLength="14.69" lengthAdjust="spacingAndGlyphs" >000</text>
<path d="M411.5,126.0 L414.1,120.4 L476.8,120.4 L479.4,126.0 L476.8,131.6 L414.1,131.6 Z" fill="none" stroke="#12ac12" stroke-width="1.5" stroke-linejoin="round"/>
<text x="438.10" y="129.00" font-family='"Liberation Sans",sans-serif' font-size="9.71" fill="#e0e0e0" stroke="#e0e0e0" stroke-width="0.3" textLength="14.78" lengthAdjust="spacingAndGlyphs" >001</text>
<path d="M479.4,126.0 L482.0,120.4 L544.7,120.4 L547.3,126.0 L544.7,131.6 L482.0,131.6 Z" fill="none" stroke="#12ac12" stroke-width="1.5" stroke-linejoin="round"/>
<text x="506.00" y="129.00" font-family='"Liberation Sans",sans-serif' font-size="9.71" fill="#e0e0e0" stroke="#e0e0e0" stroke-width="0.3" textLength="14.69" lengthAdjust="spacingAndGlyphs" >010</text>
<path d="M547.3,126.0 L549.9,120.4 L612.6,120.4 L615.2,126.0 L612.6,131.6 L549.9,131.6 Z" fill="none" stroke="#12ac12" stroke-width="1.5" stroke-linejoin="round"/>
<text x="573.88" y="129.00" font-family='"Liberation Sans",sans-serif' font-size="9.71" fill="#e0e0e0" stroke="#e0e0e0" stroke-width="0.3" textLength="14.78" lengthAdjust="spacingAndGlyphs" >011</text>
<path d="M615.2,126.0 L617.8,120.4 L680.5,120.4 L683.1,126.0 L680.5,131.6 L617.8,131.6 Z" fill="none" stroke="#12ac12" stroke-width="1.5" stroke-linejoin="round"/>
<text x="641.47" y="129.00" font-family='"Liberation Sans",sans-serif' font-size="9.71" fill="#e0e0e0" stroke="#e0e0e0" stroke-width="0.3" textLength="15.02" lengthAdjust="spacingAndGlyphs" >100</text>
<path d="M683.1,126.0 L685.7,120.4 L748.4,120.4 L751.0,126.0 L748.4,131.6 L685.7,131.6 Z" fill="none" stroke="#12ac12" stroke-width="1.5" stroke-linejoin="round"/>
<text x="709.37" y="129.00" font-family='"Liberation Sans",sans-serif' font-size="9.71" fill="#e0e0e0" stroke="#e0e0e0" stroke-width="0.3" textLength="15.12" lengthAdjust="spacingAndGlyphs" >101</text>
<path d="M751.0,126.0 L753.6,120.4 L816.3,120.4 L818.9,126.0 L816.3,131.6 L753.6,131.6 Z" fill="none" stroke="#12ac12" stroke-width="1.5" stroke-linejoin="round"/>
<text x="777.24" y="129.00" font-family='"Liberation Sans",sans-serif' font-size="9.71" fill="#e0e0e0" stroke="#e0e0e0" stroke-width="0.3" textLength="15.03" lengthAdjust="spacingAndGlyphs" >110</text>
<path d="M818.9,126.0 L821.5,120.4 L1018.7,120.4 L1021.3,126.0 L1018.7,131.6 L821.5,131.6 Z" fill="none" stroke="#12ac12" stroke-width="1.5" stroke-linejoin="round"/>
<text x="912.35" y="129.00" font-family='"Liberation Sans",sans-serif' font-size="9.86" fill="#e0e0e0" stroke="#e0e0e0" stroke-width="0.3" textLength="15.20" lengthAdjust="spacingAndGlyphs" >111</text>
<path d="M343.6,142.6 L346.2,136.6 L408.9,136.6 L411.5,142.6 L408.9,148.6 L346.2,148.6 Z" fill="none" stroke="#12ac12" stroke-width="1.5" stroke-linejoin="round"/>
<text x="358.46" y="146.00" font-family='"Liberation Sans",sans-serif' font-size="9.71" fill="#e0e0e0" stroke="#e0e0e0" stroke-width="0.3" textLength="38.22" lengthAdjust="spacingAndGlyphs" >00000001</text>
<path d="M411.5,142.6 L414.1,136.6 L476.8,136.6 L479.4,142.6 L476.8,148.6 L414.1,148.6 Z" fill="none" stroke="#12ac12" stroke-width="1.5" stroke-linejoin="round"/>
<text x="426.36" y="146.00" font-family='"Liberation Sans",sans-serif' font-size="9.71" fill="#e0e0e0" stroke="#e0e0e0" stroke-width="0.3" textLength="38.14" lengthAdjust="spacingAndGlyphs" >00000010</text>
<path d="M479.4,142.6 L482.0,136.6 L544.7,136.6 L547.3,142.6 L544.7,148.6 L482.0,148.6 Z" fill="none" stroke="#12ac12" stroke-width="1.5" stroke-linejoin="round"/>
<text x="494.26" y="146.00" font-family='"Liberation Sans",sans-serif' font-size="9.71" fill="#e0e0e0" stroke="#e0e0e0" stroke-width="0.3" textLength="38.14" lengthAdjust="spacingAndGlyphs" >00000100</text>
<path d="M547.3,142.6 L549.9,136.6 L612.6,136.6 L615.2,142.6 L612.6,148.6 L549.9,148.6 Z" fill="none" stroke="#12ac12" stroke-width="1.5" stroke-linejoin="round"/>
<text x="562.16" y="146.00" font-family='"Liberation Sans",sans-serif' font-size="9.71" fill="#e0e0e0" stroke="#e0e0e0" stroke-width="0.3" textLength="38.14" lengthAdjust="spacingAndGlyphs" >00001000</text>
<path d="M615.2,142.6 L617.8,136.6 L680.5,136.6 L683.1,142.6 L680.5,148.6 L617.8,148.6 Z" fill="none" stroke="#12ac12" stroke-width="1.5" stroke-linejoin="round"/>
<text x="630.06" y="146.00" font-family='"Liberation Sans",sans-serif' font-size="9.71" fill="#e0e0e0" stroke="#e0e0e0" stroke-width="0.3" textLength="38.14" lengthAdjust="spacingAndGlyphs" >00010000</text>
<path d="M683.1,142.6 L685.7,136.6 L748.4,136.6 L751.0,142.6 L748.4,148.6 L685.7,148.6 Z" fill="none" stroke="#12ac12" stroke-width="1.5" stroke-linejoin="round"/>
<text x="697.96" y="146.00" font-family='"Liberation Sans",sans-serif' font-size="9.71" fill="#e0e0e0" stroke="#e0e0e0" stroke-width="0.3" textLength="38.14" lengthAdjust="spacingAndGlyphs" >00100000</text>
<path d="M751.0,142.6 L753.6,136.6 L816.3,136.6 L818.9,142.6 L816.3,148.6 L753.6,148.6 Z" fill="none" stroke="#12ac12" stroke-width="1.5" stroke-linejoin="round"/>
<text x="765.86" y="146.00" font-family='"Liberation Sans",sans-serif' font-size="9.71" fill="#e0e0e0" stroke="#e0e0e0" stroke-width="0.3" textLength="38.14" lengthAdjust="spacingAndGlyphs" >01000000</text>
<path d="M818.9,142.6 L821.5,136.6 L1018.7,136.6 L1021.3,142.6 L1018.7,148.6 L821.5,148.6 Z" fill="none" stroke="#12ac12" stroke-width="1.5" stroke-linejoin="round"/>
<text x="900.70" y="146.00" font-family='"Liberation Sans",sans-serif' font-size="9.71" fill="#e0e0e0" stroke="#e0e0e0" stroke-width="0.3" textLength="38.45" lengthAdjust="spacingAndGlyphs" >10000000</text>
<rect x="1021" y="69" width="2" height="416" fill="#cccc33"/>
<rect x="1023" y="69" width="1" height="447" fill="#b8b8b8"/>
<rect x="1023" y="70" width="1" height="13" fill="#202020"/>
<rect x="852.5" y="43" width="1" height="24" fill="#e2e0dc"/>
<rect x="1023" y="0" width="1" height="69" fill="#8c8c8c"/>
<text x="347.28" y="508.70" font-family='"Liberation Sans",sans-serif' font-size="10.14" fill="#d8d8d8" stroke="#d8d8d8" stroke-width="0.3" textLength="66.24" lengthAdjust="spacingAndGlyphs" >X1: 1,000.000 ns</text>
</svg>
</body></html>
